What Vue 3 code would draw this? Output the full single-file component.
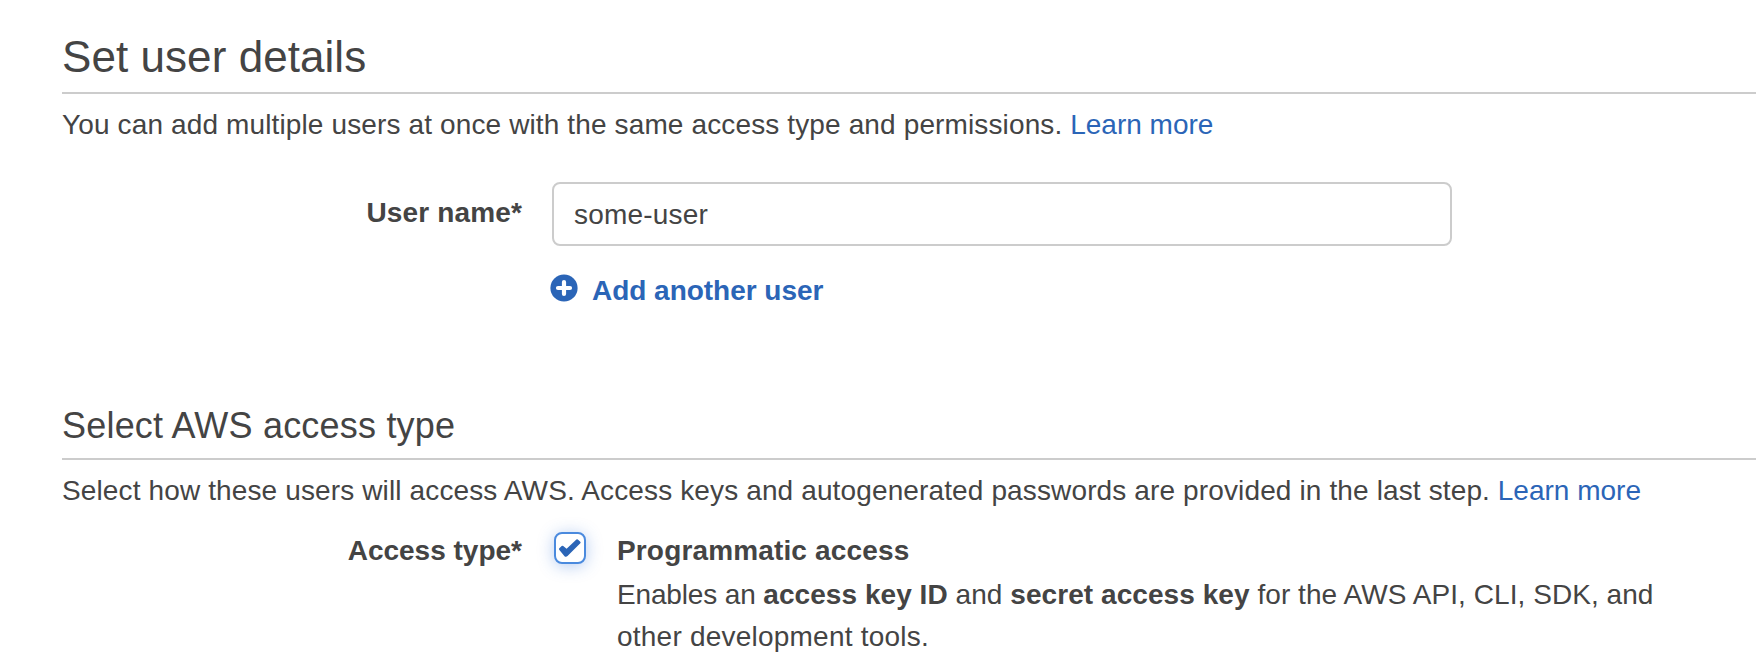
<script setup>
import { ref } from 'vue'

const userName = ref('some-user')
const programmatic = ref(true)
</script>

<template>
  <main class="page">
    <section class="details">
      <h1>Set user details</h1>
      <p class="intro"><span class="intro-text">You can add multiple users at once with the same access type and permissions.</span>&#32;<a>Learn more</a></p>
      <div class="row">
        <label class="label name-label" for="user-name">User name*</label>
        <div class="field">
          <input id="user-name" v-model="userName" class="input" type="text" />
          <a class="add">
            <svg class="plus" viewBox="0 0 28 28" width="28" height="28">
              <circle cx="14" cy="14" r="13.6" fill="#2b65b7" />
              <path d="M14 8V20M8 14H20" stroke="#fff" stroke-width="4.2" stroke-linecap="round" />
            </svg>
            <span>Add another user</span>
          </a>
        </div>
      </div>
    </section>

    <section class="access">
      <h2>Select AWS access type</h2>
      <p class="intro"><span class="intro-text">Select how these users will access AWS. Access keys and autogenerated passwords are provided in the last step.</span>&#32;<a>Learn more</a></p>
      <div class="row access-row">
        <span class="label access-label">Access type*</span>
        <button class="check" type="button" role="checkbox" :aria-checked="programmatic" @click="programmatic = !programmatic">
          <svg v-if="programmatic" viewBox="0 0 28 28" width="28" height="28">
            <path d="M3.2 15.8Q2.6 15 3.3 14.3L5.7 12Q6.4 11.4 7.2 12L10.6 14.8L20.4 5.5Q21.1 4.9 21.8 5.5L24.3 7.8Q25 8.5 24.3 9.3L11.5 22.1Q10 23.5 8.5 22.2Z" fill="#2b65b7" />
          </svg>
        </button>
        <div class="option">
          <strong class="title">Programmatic access</strong>
          <div class="desc"><span class="lead">Enables an </span><b>access key ID</b> and <b>secret access key</b> for the AWS API, CLI, SDK, and<br /><span class="last">other development tools.</span></div>
        </div>
      </div>
    </section>
  </main>
</template>

<style>
body {
  margin: 0;
  background: #fff;
}
</style>

<style scoped>
.page {
  box-sizing: border-box;
  height: 672px;
  padding: 27px 0 0 62px;
  overflow: hidden;
  background: #fff;
  color: #444;
  font-family: "Liberation Sans", Arial, sans-serif;
  font-size: 28px;
  line-height: 42px;
  white-space: nowrap;
}
h1,
h2 {
  margin: 0;
  border-bottom: 2px solid #ccc;
  font-weight: 400;
}
h1 {
  padding-bottom: 5px;
  font-size: 44px;
  line-height: 60px;
  letter-spacing: 0.06px;
}
h2 {
  padding-bottom: 7px;
  font-size: 36px;
  line-height: 50px;
  letter-spacing: 0.2px;
}
.intro {
  margin: 10px 0 0;
}
.intro-text {
  letter-spacing: 0.13px;
}
a {
  color: #2b65b7;
}
.row {
  display: flex;
  align-items: flex-start;
  margin-top: 36px;
}
.label {
  width: 460px;
  text-align: right;
  font-weight: 700;
}
.name-label {
  padding-top: 10px;
  letter-spacing: 0.15px;
}
.field {
  display: flex;
  flex-direction: column;
  margin-left: 30px;
}
.input {
  box-sizing: border-box;
  width: 900px;
  height: 64px;
  padding: 2px 20px 0;
  border: 2px solid #ccc;
  border-radius: 8px;
  outline: none;
  background: #fff;
  color: #444;
  font: inherit;
  letter-spacing: 0.2px;
}
.add {
  display: flex;
  align-items: flex-start;
  gap: 14px;
  margin: 24px 0 0 -2px;
  font-weight: 700;
  letter-spacing: -0.03px;
}
.plus {
  margin-top: 4px;
}
.access {
  margin-top: 89px;
}
.access-row {
  margin-top: 18px;
}
.check {
  box-sizing: border-box;
  width: 32px;
  height: 32px;
  margin: 2px 31px 0 32px;
  padding: 0;
  border: 2px solid #4a8ade;
  border-radius: 8px;
  background: #fff;
  box-shadow: 0 2px 16px rgba(43, 110, 215, 0.35);
}
.check svg {
  display: block;
}
.title {
  display: block;
  margin-bottom: 2px;
  letter-spacing: 0.15px;
}
.desc {
  letter-spacing: 0.06px;
}
.lead {
  letter-spacing: -0.15px;
}
.last {
  letter-spacing: 0.22px;
}
</style>
